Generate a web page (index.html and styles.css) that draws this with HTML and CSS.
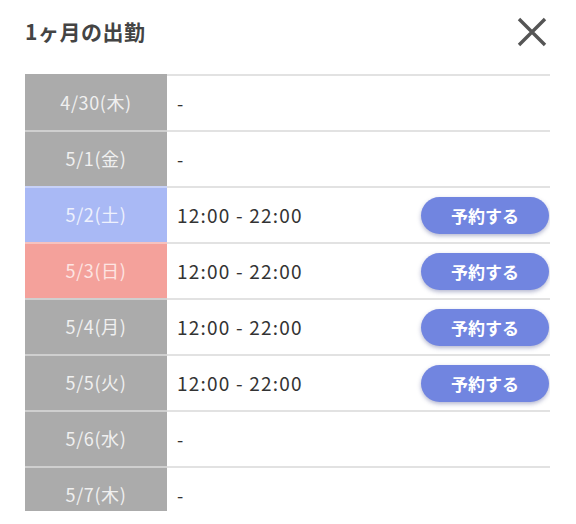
FILE: index.html
```html
<!DOCTYPE html>
<html lang="ja">
<head>
<meta charset="utf-8">
<link rel="stylesheet" href="styles.css">
</head>
<body>
<div class="modal">
  <div class="header">
    <h1 class="title">1ヶ月の出勤</h1>
    <svg class="close" width="30" height="30" viewBox="0 0 30 30"><path d="M2 2L28 28M28 2L2 28" stroke="#555" stroke-width="3.4" stroke-linecap="butt" fill="none"/></svg>
  </div>
  <div class="list">
    <div class="row first"><div class="date">4/30(木)</div><div class="val">-</div></div>
    <div class="row"><div class="date">5/1(金)</div><div class="val">-</div></div>
    <div class="row"><div class="date sat">5/2(土)</div><div class="val"><span class="time">12:00 - 22:00</span><button class="btn">予約する</button></div></div>
    <div class="row"><div class="date sun">5/3(日)</div><div class="val"><span class="time">12:00 - 22:00</span><button class="btn">予約する</button></div></div>
    <div class="row"><div class="date">5/4(月)</div><div class="val"><span class="time">12:00 - 22:00</span><button class="btn">予約する</button></div></div>
    <div class="row"><div class="date">5/5(火)</div><div class="val"><span class="time">12:00 - 22:00</span><button class="btn">予約する</button></div></div>
    <div class="row"><div class="date">5/6(水)</div><div class="val">-</div></div>
    <div class="row"><div class="date">5/7(木)</div><div class="val">-</div></div>
  </div>
</div>
</body>
</html>
```
FILE: styles.css
```css
* { box-sizing: border-box; }
html, body { margin: 0; padding: 0; background: #fff; }
body { font-family: "Noto Sans CJK JP", "Noto Sans", sans-serif; color: #333; }
.modal { width: 576px; height: 524px; }
.header { height: 66px; margin-bottom: 8px; display: flex; align-items: center; justify-content: space-between; padding: 0 29px 0 25px; }
.title { margin: -4px 0 0; font-size: 21px; font-weight: 700; color: #444; letter-spacing: 0.5px; }
.close { display: block; margin-top: -3px; }
.list { margin: 0 26px 0 25px; height: 437px; overflow: hidden; }
.row { display: grid; grid-template-columns: 142px 1fr; height: 56px; }
.date { background: #ababab; color: #f0f0f0; font-size: 18px; letter-spacing: 0.6px; display: flex; align-items: center; justify-content: center; border-top: 2px solid #cfcfcf; padding-bottom: 2px; }
.first .date { border-top-color: #ababab; }
.date.sat { background: #a9b9f5; color: #eef1fd; border-top-color: #c7d1f8; }
.date.sun { background: #f4a19b; color: #fde5e3; border-top-color: #f6c2be; }
.val { border-top: 2px solid #e2e2e2; padding-left: 10px; display: flex; align-items: center; justify-content: space-between; font-size: 18px; color: #333; }
.time { font-size: 19px; letter-spacing: 1.2px; margin-top: -2px; }
.btn { width: 128px; height: 37px; margin-right: 1px; border: 0; border-radius: 19px; background: #7185e0; color: #fff; font-family: inherit; font-size: 17px; font-weight: 700; box-shadow: 0 2px 4px rgba(40, 50, 120, 0.35); padding: 0; }
```
